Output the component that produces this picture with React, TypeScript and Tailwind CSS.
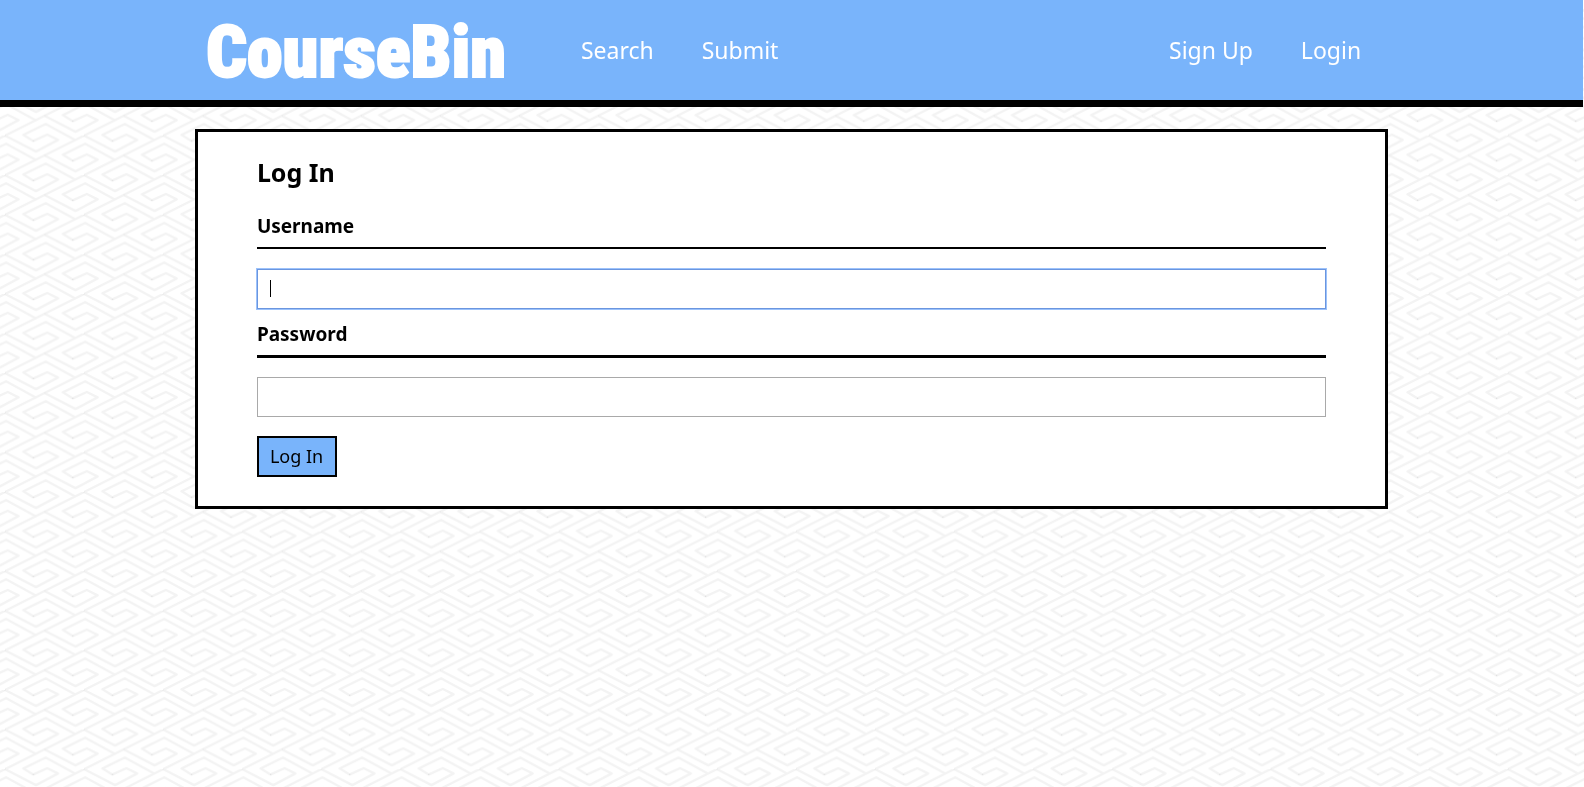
import React from 'react';

const swirlOrigins = [
  [0, 0],
  [118.6, -59.4],
  [118.6, 59.4],
  [-118.6, -59.4],
  [-118.6, 59.4],
  [0, 118.8],
  [0, -118.8],
  [237.3, 0],
];

function PatternBackground() {
  return (
    <svg className="fixed inset-0 -z-10 h-full w-full" aria-hidden="true">
      <defs>
        <pattern
          id="fretwork"
          width="237.3"
          height="118.8"
          patternUnits="userSpaceOnUse"
          patternTransform="translate(5 96) scale(0.33333)"
        >
          {swirlOrigins.map(([x, y]) => (
            <g key={`${x},${y}`} transform={`translate(${x} ${y})`}>
              <g fill="none" stroke="#f3f3f3" strokeWidth="7" strokeLinejoin="round">
                <path d="M0 0 L93 48 L159 13 L127 -3 L85 16 L55 -2 L122 -35 L212 14" />
                <path d="M0 0 L118.6 -59.4" />
              </g>
              <circle cx="0" cy="0" r="2" fill="#dedede" />
              <circle cx="85" cy="16" r="2" fill="#dedede" />
            </g>
          ))}
        </pattern>
      </defs>
      <rect width="100%" height="100%" fill="white" />
      <rect width="100%" height="100%" fill="url(#fretwork)" />
    </svg>
  );
}

function NavLink({ children }: { children: React.ReactNode }) {
  return (
    <a href="#" className="text-[23px] leading-8 text-white">
      {children}
    </a>
  );
}

export default function App() {
  return (
    <div className="relative isolate min-h-screen border-r border-gray-200 font-['Noto_Sans','Open_Sans',sans-serif] text-black">
      <PatternBackground />
      <header className="border-b-7 border-black bg-[#79b4fb]">
        <div className="mx-auto flex h-[100px] w-3/4 items-center pr-6 pl-2">
          <a
            href="#"
            className="mr-[71px] w-[304px] pt-[6px] whitespace-nowrap font-['Roboto_Condensed','Roboto',sans-serif] text-[72px] leading-[84px] font-black text-white [-webkit-text-stroke:2px_white]"
          >
            CourseBin
          </a>
          <nav className="flex flex-1 gap-12">
            <NavLink>Search</NavLink>
            <NavLink>Submit</NavLink>
            <div className="ml-auto flex gap-12">
              <NavLink>Sign Up</NavLink>
              <NavLink>Login</NavLink>
            </div>
          </nav>
        </div>
      </header>
      <main className="mx-auto mt-[22px] w-[calc(75%+6px)] border-3 border-black bg-white px-[59px] pt-[22px] pb-[29px]">
        <h1 className="text-[25px] leading-9 font-bold">Log In</h1>
        <form onSubmit={(e) => e.preventDefault()}>
          <label htmlFor="username" className="mt-[22px] block border-b-2 border-black pb-[7px] text-[19px] leading-7 font-bold">
            Username
          </label>
          <div className="relative mt-5">
            <input
              id="username"
              autoFocus
              placeholder=" "
              className="peer block h-10 w-full border border-[#6b96df] bg-white px-3 text-lg caret-transparent outline-1 outline-[#9cc2fb] not-placeholder-shown:caret-black"
            />
            <span className="pointer-events-none absolute top-[11px] left-[13px] h-[17px] w-px bg-black peer-[&:not(:placeholder-shown)]:hidden" />
          </div>
          <label htmlFor="password" className="mt-[11px] block border-b-3 border-black pb-[7px] text-[19px] leading-7 font-bold">
            Password
          </label>
          <input
            id="password"
            type="password"
            className="mt-[19px] block h-10 w-full border border-[#a9a9a9] bg-white px-3 text-lg outline-none"
          />
          <button type="submit" className="mt-[19px] block h-[41px] border-2 border-black bg-[#79b4fb] pr-3 pb-[2px] pl-[11px] text-lg leading-6">
            Log In
          </button>
        </form>
      </main>
    </div>
  );
}
